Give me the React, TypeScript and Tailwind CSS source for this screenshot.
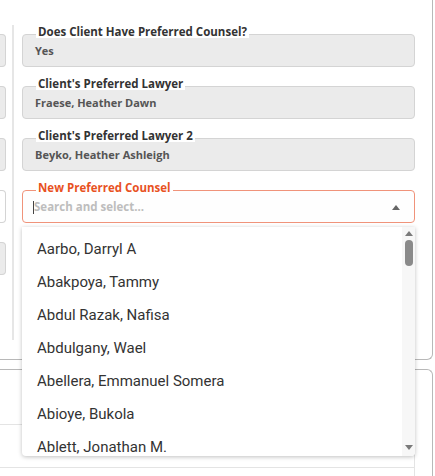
import React from 'react';

const people = [
  'Aarbo, Darryl A',
  'Abakpoya, Tammy',
  'Abdul Razak, Nafisa',
  'Abdulgany, Wael',
  'Abellera, Emmanuel Somera',
  'Abioye, Bukola',
  'Ablett, Jonathan M.',
];

const formFont = { fontFamily: '"Open Sans", "Liberation Sans", sans-serif' };

const ReadOnlyField = ({ label, value }: { label: string; value: string }) => (
  <div
    className="relative h-[33px] rounded-[4px] border border-[#d4d4d4] bg-[#ebebeb] flex items-center pl-[12px] pt-[1px]"
    style={formFont}
  >
    <span className="absolute left-[13px] top-[-9px] bg-white px-[2px] text-[11.5px] leading-[12px] font-bold text-[#333]">
      {label}
    </span>
    <span className="text-[11px] font-bold text-[#555]">{value}</span>
  </div>
);

const LeftBox = ({ grey }: { grey: boolean }) => (
  <div
    className={
      grey
        ? 'h-[33px] rounded-r-[4px] border border-l-0 border-[#d4d4d4] bg-[#ebebeb]'
        : 'h-[33px] rounded-r-[4px] border border-l-0 border-[#d4d4d4] bg-white'
    }
  />
);

export default function App() {
  return (
    <div
      className="relative w-[435px] h-[476px] overflow-hidden bg-white"
      style={{ fontFamily: 'Roboto, "Liberation Sans", sans-serif' }}
    >
      {/* upper card */}
      <div className="mr-[2px] h-[360px] rounded-br-[6px] border-r border-b border-[#b8b8b8] flex">
        <div className="w-[6px] pt-[34px] flex flex-col gap-[19px]">
          <LeftBox grey />
          <LeftBox grey />
          <LeftBox grey />
          <LeftBox grey={false} />
          <LeftBox grey />
        </div>
        <div className="ml-[6px] mt-[25px] h-[315px] w-[2px] bg-[#e6e6e6]" />
        <div className="ml-[8px] w-[393px] pt-[34px] flex flex-col gap-[19px]">
          <ReadOnlyField label="Does Client Have Preferred Counsel?" value="Yes" />
          <ReadOnlyField label="Client's Preferred Lawyer" value="Fraese, Heather Dawn" />
          <ReadOnlyField label="Client's Preferred Lawyer 2" value="Beyko, Heather Ashleigh" />
          <div
            className="relative h-[33px] rounded-[4px] border border-[#f0937a] bg-[#fefefe] flex items-center pl-[10px] pr-[14px] pt-[1px]"
            style={formFont}
          >
            <span className="absolute left-[13px] top-[-9px] bg-white px-[2px] text-[11.5px] leading-[12px] font-bold text-[#e8521f]">
              New Preferred Counsel
            </span>
            <span className="h-[13px] w-px bg-[#444]" />
            <span className="text-[11.5px] font-bold text-[#bdbdbd]">Search and select...</span>
            <span className="ml-auto w-0 h-0 border-l-[4px] border-r-[4px] border-b-[5px] border-l-transparent border-r-transparent border-b-[#666]" />
          </div>
        </div>
      </div>

      {/* lower card */}
      <div className="mt-[9px] mr-[2px] h-[120px] rounded-tr-[6px] border-t border-r border-[#b8b8b8]">
        <div className="mt-[54px] w-[415px] h-[60px] border-t border-r border-[#e4e4e4]">
          <div className="mt-[42px] border-t border-[#e4e4e4]" />
        </div>
      </div>

      {/* dropdown list */}
      <div className="absolute left-[22px] top-[227px] w-[393px] h-[229px] rounded-b-[4px] bg-white shadow-[0_1px_4px_rgba(0,0,0,0.25)] flex overflow-hidden">
        <ul className="flex-1 pt-[6px]">
          {people.map((p) => (
            <li key={p} className="h-[33px] flex items-center pl-[15px] text-[15px] text-[#333]">
              {p}
            </li>
          ))}
        </ul>
        <div className="w-[13px] bg-[#f7f7f7] flex flex-col items-center pt-[4px] pb-[6px]">
          <span className="w-0 h-0 border-l-[4px] border-r-[4px] border-b-[5px] border-l-transparent border-r-transparent border-b-[#7a7a7a]" />
          <span className="mt-[4px] w-[8px] h-[26px] rounded-full bg-[#8a8a8a]" />
          <span className="mt-auto w-0 h-0 border-l-[4px] border-r-[4px] border-t-[5px] border-l-transparent border-r-transparent border-t-[#7a7a7a]" />
        </div>
      </div>
    </div>
  );
}
